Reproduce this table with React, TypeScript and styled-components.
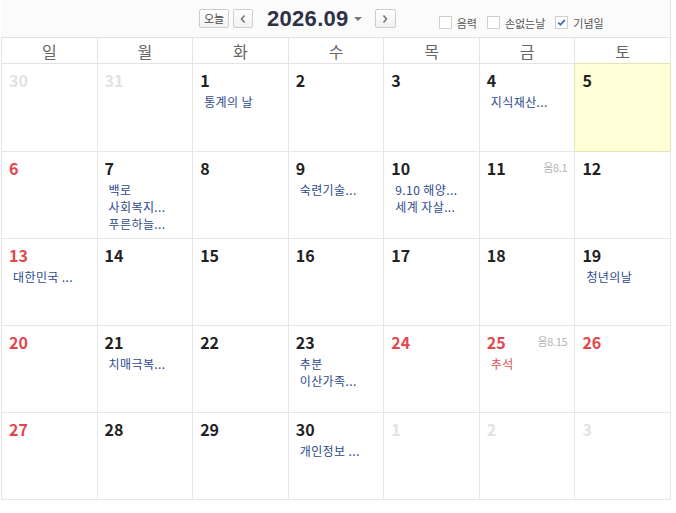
import React from "react";
import styled, { createGlobalStyle } from "styled-components";

const Global = createGlobalStyle`
  html, body { margin: 0; padding: 0; background: #fff; }
  body { font-family: "Noto Sans CJK KR", "Noto Sans", sans-serif; }
`;

const Wrapper = styled.div`
  width: 670px;
  margin-left: 1px;
`;

const Toolbar = styled.div`
  border-bottom: 1px solid #e2e2e2;
  border-right: 1px solid #e2e2e2;
  background: #fbfbfb;
  display: flex;
  align-items: center;
  padding-left: 198px;
  box-sizing: border-box;
  height: 38px;
`;

const Btn = styled.button<{ $w: number }>`
  width: ${(p) => p.$w}px;
  height: 19px;
  padding: 0;
  margin: 0;
  border: 1px solid #cdcdcd;
  border-radius: 2px;
  background: linear-gradient(#ffffff, #f2f2f2);
  display: flex;
  align-items: center;
  justify-content: center;
  font-family: "Noto Sans CJK KR", sans-serif;
  font-size: 11px;
  color: #444;
  line-height: 1;
  cursor: pointer;
`;

const Title = styled.div`
  font-family: "Liberation Sans", Arial, sans-serif;
  font-weight: 700;
  font-size: 22px;
  letter-spacing: 0.3px;
  color: #2e3148;
  margin-left: 14px;
  line-height: 24px;
`;

const Caret = styled.span`
  width: 0;
  height: 0;
  border-left: 4px solid transparent;
  border-right: 4px solid transparent;
  border-top: 4px solid #777;
  margin-left: 5px;
  margin-right: 13px;
  margin-top: 1px;
`;

const Checks = styled.div`
  display: flex;
  align-items: center;
  margin-left: 43px;
  margin-top: 8px;
  gap: 10px;
`;

const CheckItem = styled.label`
  display: flex;
  align-items: center;
  gap: 5px;
  font-size: 11px;
  color: #555;
  line-height: 14px;
`;

const Box = styled.span`
  width: 13px;
  height: 13px;
  box-sizing: border-box;
  border: 1px solid #cfcfcf;
  background: #fff;
  display: flex;
  align-items: center;
  justify-content: center;
`;

const Grid = styled.div`
  display: grid;
  grid-template-columns: repeat(7, 1fr);
  grid-template-rows: 26px 88px repeat(4, 87px);
  border-left: 1px solid #e4e4e4;
`;

const HeadCell = styled.div`
  border-right: 1px solid #e4e4e4;
  border-bottom: 1px solid #e4e4e4;
  display: flex;
  align-items: center;
  justify-content: center;
  font-size: 16px;
  color: #666;
  line-height: 1;
`;

const Cell = styled.div<{ $today?: boolean }>`
  border-right: 1px solid ${(p) => (p.$today ? "#e6e2b2" : "#e6e6e6")};
  border-bottom: 1px solid ${(p) => (p.$today ? "#e6e2b2" : "#e6e6e6")};
  background: ${(p) => (p.$today ? "#ffffd8" : "#fff")};
  box-shadow: ${(p) => (p.$today ? "-1px -1px 0 #e6e2b2" : "none")};
  padding: 6px 7px 0 7px;
  display: flex;
  flex-direction: column;
  min-width: 0;
`;

const CellTop = styled.div`
  display: flex;
  justify-content: space-between;
  align-items: flex-start;
`;

const DayNum = styled.span<{ $tone: "normal" | "red" | "faded" }>`
  font-size: 16px;
  font-weight: 700;
  line-height: 20px;
  color: ${(p) =>
    p.$tone === "red" ? "#e3474b" : p.$tone === "faded" ? "#e2e2e2" : "#222"};
`;

const Lunar = styled.span`
  font-size: 11px;
  color: #b4b4b4;
  line-height: 18px;
  letter-spacing: -0.3px;
`;

const Events = styled.div`
  margin-top: 3px;
  padding-left: 4px;
  display: flex;
  flex-direction: column;
`;

const Event = styled.div<{ $red?: boolean }>`
  font-size: 12px;
  letter-spacing: 0.4px;
  line-height: 17px;
  color: ${(p) => (p.$red ? "#e05252" : "#2c4a8e")};
  white-space: nowrap;
`;

type Day = {
  n: number;
  tone: "normal" | "red" | "faded";
  events?: { t: string; red?: boolean }[];
  lunar?: string;
  today?: boolean;
};

const ev = (...t: string[]) => t.map((x) => ({ t: x }));

const days: Day[] = [
  { n: 30, tone: "faded" },
  { n: 31, tone: "faded" },
  { n: 1, tone: "normal", events: ev("통계의 날") },
  { n: 2, tone: "normal" },
  { n: 3, tone: "normal" },
  { n: 4, tone: "normal", events: ev("지식재산...") },
  { n: 5, tone: "normal", today: true },
  { n: 6, tone: "red" },
  { n: 7, tone: "normal", events: ev("백로", "사회복지...", "푸른하늘...") },
  { n: 8, tone: "normal" },
  { n: 9, tone: "normal", events: ev("숙련기술...") },
  { n: 10, tone: "normal", events: ev("9.10 해양...", "세계 자살...") },
  { n: 11, tone: "normal", lunar: "음8.1" },
  { n: 12, tone: "normal" },
  { n: 13, tone: "red", events: ev("대한민국 ...") },
  { n: 14, tone: "normal" },
  { n: 15, tone: "normal" },
  { n: 16, tone: "normal" },
  { n: 17, tone: "normal" },
  { n: 18, tone: "normal" },
  { n: 19, tone: "normal", events: ev("청년의날") },
  { n: 20, tone: "red" },
  { n: 21, tone: "normal", events: ev("치매극복...") },
  { n: 22, tone: "normal" },
  { n: 23, tone: "normal", events: ev("추분", "이산가족...") },
  { n: 24, tone: "red" },
  { n: 25, tone: "red", lunar: "음8.15", events: [{ t: "추석", red: true }] },
  { n: 26, tone: "red" },
  { n: 27, tone: "red" },
  { n: 28, tone: "normal" },
  { n: 29, tone: "normal" },
  { n: 30, tone: "normal", events: ev("개인정보 ...") },
  { n: 1, tone: "faded" },
  { n: 2, tone: "faded" },
  { n: 3, tone: "faded" },
];

const weekdays = ["일", "월", "화", "수", "목", "금", "토"];

const Chevron = ({ dir }: { dir: "l" | "r" }) => (
  <svg width="8" height="10" viewBox="0 0 8 10">
    <path
      d={dir === "l" ? "M5.5 1.5 L2.5 5 L5.5 8.5" : "M2.5 1.5 L5.5 5 L2.5 8.5"}
      fill="none"
      stroke="#777"
      strokeWidth="1.6"
    />
  </svg>
);

const CheckMark = () => (
  <svg width="9" height="9" viewBox="0 0 9 9">
    <path d="M1.2 4.6 L3.5 6.8 L7.8 1.8" fill="none" stroke="#3a6fc4" strokeWidth="1.8" />
  </svg>
);

export default function App() {
  return (
    <Wrapper>
      <Global />
      <Toolbar>
        <Btn $w={30}>오늘</Btn>
        <Btn $w={20} style={{ marginLeft: 4 }}>
          <Chevron dir="l" />
        </Btn>
        <Title>2026.09</Title>
        <Caret />
        <Btn $w={21}>
          <Chevron dir="r" />
        </Btn>
        <Checks>
          <CheckItem>
            <Box />
            음력
          </CheckItem>
          <CheckItem>
            <Box />
            손없는날
          </CheckItem>
          <CheckItem>
            <Box>
              <CheckMark />
            </Box>
            기념일
          </CheckItem>
        </Checks>
      </Toolbar>
      <Grid>
        {weekdays.map((w) => (
          <HeadCell key={w}>{w}</HeadCell>
        ))}
        {days.map((d, i) => (
          <Cell key={i} $today={d.today}>
            <CellTop>
              <DayNum $tone={d.tone}>{d.n}</DayNum>
              {d.lunar && <Lunar>{d.lunar}</Lunar>}
            </CellTop>
            {d.events && (
              <Events>
                {d.events.map((e, j) => (
                  <Event key={j} $red={e.red}>
                    {e.t}
                  </Event>
                ))}
              </Events>
            )}
          </Cell>
        ))}
      </Grid>
    </Wrapper>
  );
}
